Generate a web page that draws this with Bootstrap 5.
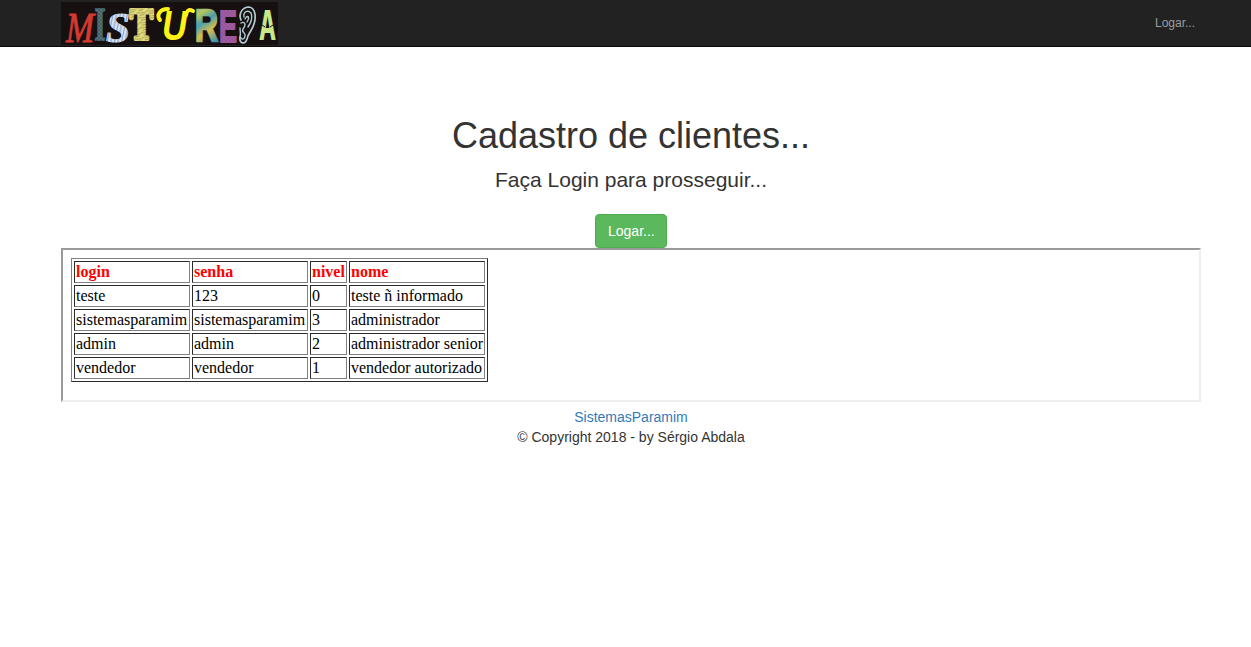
<!DOCTYPE html>
<html lang="pt-br">
<head>
<meta charset="utf-8">
<meta name="viewport" content="width=device-width, initial-scale=1">
<title>Cadastro de clientes</title>
<link href="https://cdn.jsdelivr.net/npm/bootstrap@5.3.0/dist/css/bootstrap.min.css" rel="stylesheet">
<style>
body{font-family:"Liberation Sans",Arial,sans-serif;font-size:14px;line-height:20px;color:#333;background:#fff}
.topbar{background:#222;border-bottom:1px solid #080808;height:47px}
.page-wrap{width:1140px;margin-left:61px}
.topbar .nav-link{font-size:12px;line-height:20px;color:#9d9d9d;padding:0 6px 0 0}
.brand-logo{display:block;width:217px;height:43px;margin-top:2px;overflow:visible}
.hero{padding-top:69px}
.hero h1{font-size:36px;line-height:40px;font-weight:400;margin:0 0 9px}
.hero .intro{font-size:21px;line-height:29px;margin:0 0 20px}
.btn-login{--bs-btn-color:#fff;--bs-btn-bg:#5cb85c;--bs-btn-border-color:#4cae4c;--bs-btn-hover-color:#fff;--bs-btn-hover-bg:#449d44;--bs-btn-font-size:14px;--bs-btn-line-height:20px;--bs-btn-border-radius:4px;width:72px}
.frame{height:154px;border:2px solid;border-color:#9a9a9a #eee #eee #9a9a9a;padding:8px}
.users{width:417px;table-layout:fixed;border-collapse:separate;border-spacing:2px;border:1px solid;border-color:#808080 #2b2b2b #2b2b2b #808080;font:16px/18px "Liberation Serif","Times New Roman",serif;color:#000}
.users th,.users td{border:1px solid;border-color:#2b2b2b #808080 #808080 #2b2b2b;padding:1px;height:22px;white-space:nowrap;text-align:left}
.users th{color:#f00}
footer{padding-top:5px}
footer a{color:#337ab7;text-decoration:none}
</style>
</head>
<body>
<nav class="topbar">
  <div class="page-wrap d-flex justify-content-between">
    <a href="#" aria-label="Mistureba">
      <svg class="brand-logo" viewBox="0 0 217 43">
        <defs>
          <pattern id="denim" width="4" height="4" patternUnits="userSpaceOnUse"><rect width="4" height="4" fill="#40606a"/><path d="M0 0L4 4M0 4L4 0" stroke="#5f7e85" stroke-width=".7"/></pattern>
          <pattern id="stripe" width="7" height="7" patternUnits="userSpaceOnUse" patternTransform="rotate(12)"><rect width="7" height="7" fill="#d9e6f6"/><path d="M1 0V7M4.500 0V7" stroke="#8fa0c8" stroke-width="1.2"/></pattern>
          <pattern id="straw" width="9" height="5" patternUnits="userSpaceOnUse" patternTransform="rotate(-12)"><rect width="9" height="5" fill="#e2dc7c"/><path d="M0 1.5L9 3M2 4.5H7" stroke="#8d8840" stroke-width=".7"/></pattern>
          <linearGradient id="map" x1="0" y1="0" x2=".3" y2="1"><stop offset="0" stop-color="#4ca5bd"/><stop offset=".3" stop-color="#b9c65c"/><stop offset=".5" stop-color="#4a9daf"/><stop offset=".72" stop-color="#d6bd4e"/><stop offset="1" stop-color="#3b93b4"/></linearGradient>
          <pattern id="felt" width="4" height="4" patternUnits="userSpaceOnUse"><rect width="4" height="4" fill="#98539b"/><path d="M0 1H2M2 3H4" stroke="#ad70ae" stroke-width=".7"/></pattern>
        </defs>
        <rect width="217" height="43" fill="#171011"/>
        <text x="5" y="39.500" font-family="Liberation Serif" font-style="italic" font-size="43" fill="#d33a31" stroke="#d33a31" stroke-width=".9" textLength="28" lengthAdjust="spacingAndGlyphs">M</text>
        <text x="33.500" y="37.500" font-family="Liberation Serif" font-weight="700" font-size="47" fill="url(#denim)" stroke="url(#denim)" stroke-width="1.500" textLength="11" lengthAdjust="spacingAndGlyphs">I</text>
        <text x="45" y="40" font-family="Liberation Serif" font-weight="700" font-style="italic" font-size="43" fill="url(#stripe)" stroke="url(#stripe)" stroke-width="1.200" textLength="24" lengthAdjust="spacingAndGlyphs">S</text>
        <text x="69" y="37" font-family="Liberation Serif" font-weight="700" font-size="45" fill="url(#straw)" stroke="url(#straw)" stroke-width="4" stroke-linejoin="round" textLength="23" lengthAdjust="spacingAndGlyphs">T</text>
        <path d="M99 18C95 13 99 7 107 7M125 13C126 8 128 7 132 9" fill="none" stroke="#fff315" stroke-width="4" stroke-linecap="round"/>
        <text x="101" y="38" font-family="Liberation Sans" font-weight="700" font-style="italic" font-size="43" fill="#fff315" textLength="25" lengthAdjust="spacingAndGlyphs">U</text>
        <text x="134" y="39" font-family="Liberation Sans" font-weight="700" font-size="45" fill="url(#map)" stroke="url(#map)" stroke-width="2.500" textLength="23" lengthAdjust="spacingAndGlyphs">R</text>
        <text x="158" y="39.500" font-family="Liberation Sans" font-weight="700" font-size="45" fill="url(#felt)" stroke="url(#felt)" stroke-width="2" textLength="18" lengthAdjust="spacingAndGlyphs">E</text>
        <g fill="none" stroke="#b1cbd0" stroke-linecap="round">
          <path stroke-width="1.7" d="M180 18C177 11 182 5 188 5C195 6 195 16 193 22C191 29 187 31 186 37C184 43 178 42 179 35"/>
          <path stroke-width="1.4" d="M183 15C182 9 187 8 190 11C192 15 190 21 187 25M184 17C187 12 189 15 186 20M180 21C183 19 186 22 182 27C180 31 185 30 184 34C183 38 181 38 179 35C180 32 179 29 179 26"/>
        </g>
        <text x="198" y="38" font-family="DejaVu Sans Mono" font-weight="700" font-size="40" fill="#c8e787" textLength="17" lengthAdjust="spacingAndGlyphs">A</text>
        <path d="M198 21L204 25M209 25L215 21" stroke="#171011" stroke-width="1"/>
      </svg>
    </a>
    <div class="nav align-items-center"><a class="nav-link" href="#">Logar...</a></div>
  </div>
</nav>
<main class="page-wrap">
  <section class="hero text-center">
    <h1>Cadastro de clientes...</h1>
    <p class="intro">Faça Login para prosseguir...</p>
    <a class="btn btn-login d-block mx-auto" href="#">Logar...</a>
  </section>
  <div class="frame">
    <table class="users">
      <colgroup><col style="width:116px"><col style="width:116px"><col style="width:37px"><col style="width:136px"></colgroup>
      <tr><th>login</th><th>senha</th><th>nivel</th><th>nome</th></tr>
      <tr><td>teste</td><td>123</td><td>0</td><td>teste ñ informado</td></tr>
      <tr><td>sistemasparamim</td><td>sistemasparamim</td><td>3</td><td>administrador</td></tr>
      <tr><td>admin</td><td>admin</td><td>2</td><td>administrador senior</td></tr>
      <tr><td>vendedor</td><td>vendedor</td><td>1</td><td>vendedor autorizado</td></tr>
    </table>
  </div>
  <footer class="text-center"><a href="#">SistemasParamim</a><br>© Copyright 2018 - by Sérgio Abdala</footer>
</main>
<script src="https://cdn.jsdelivr.net/npm/bootstrap@5.3.0/dist/js/bootstrap.bundle.min.js"></script>
</body>
</html>
